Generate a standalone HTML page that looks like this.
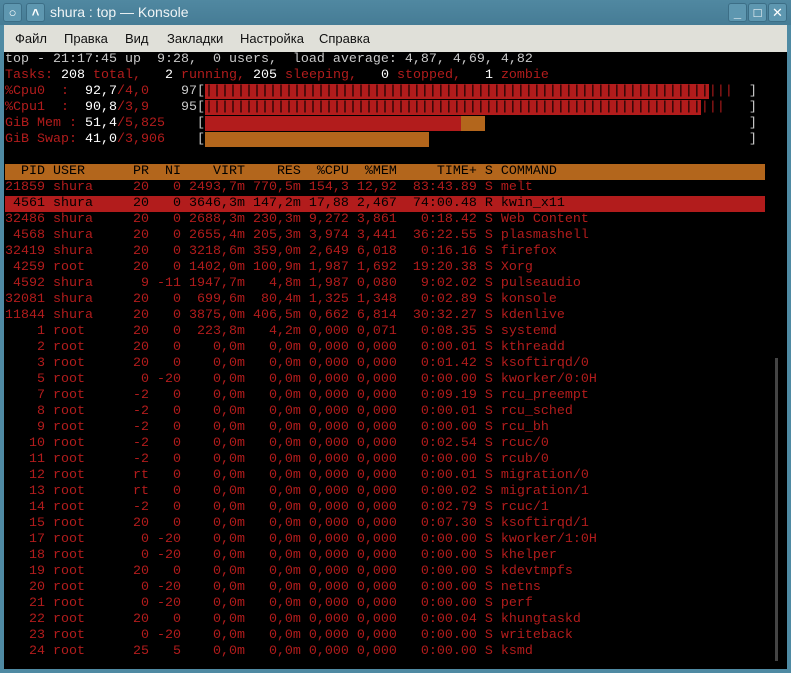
<!DOCTYPE html>
<html><head><meta charset="utf-8"><style>
*{margin:0;padding:0;box-sizing:border-box}
body{width:791px;height:673px;background:#4f8aa3;position:relative;overflow:hidden;font-family:"Liberation Sans","DejaVu Sans",sans-serif}
#title{position:absolute;left:0;top:0;width:791px;height:25px;background:linear-gradient(#5088a1,#467c95)}
.btn{position:absolute;top:3px;width:19px;height:19px;background:#5e97b0;border:1px solid #3c6e86;border-radius:3px;color:#fff;text-align:center;font-size:13px;line-height:17px;font-weight:bold}
#ttext{position:absolute;left:50px;top:4px;color:#f0f4f6;font-size:14px}
#menu{position:absolute;left:4px;top:25px;width:783px;height:27px;background:#e0e0d9}
#menu span{position:absolute;top:6px;font-size:13px;color:#111}
#term{position:absolute;left:4px;top:52px;width:783px;height:617px;background:#000}
pre{position:absolute;left:1px;top:0;font-family:"Liberation Mono","DejaVu Sans Mono",monospace;font-size:13.33px;line-height:16px;color:#b21c1c;white-space:pre}
pre div{height:16px;width:760px}
.w{color:#fff}.g{color:#c8c8c8}.k{color:#000}
.rb{background:#b21c1c;color:#000}
.ob{background:#b3661c;color:#000}
#sb{position:absolute;left:771px;top:306px;width:3px;height:303px;background:#444}
</style></head><body>
<div id="title">
<div class="btn" style="left:3px">○</div>
<div class="btn" style="left:26px">˄</div>
<div id="ttext">shura : top — Konsole</div>
<div class="btn" style="left:728px">_</div>
<div class="btn" style="left:748px">□</div>
<div class="btn" style="left:768px">✕</div>
</div>
<div id="menu">
<span style="left:11px">Файл</span><span style="left:60px">Правка</span><span style="left:121px">Вид</span><span style="left:163px">Закладки</span><span style="left:236px">Настройка</span><span style="left:315px">Справка</span>
</div>
<div id="term">
<pre><div class="g">top - 21:17:45 up  9:28,  0 users,  load average: 4,87, 4,69, 4,82</div><div>Tasks: <span class="w">208 </span>total,   <span class="w">2 </span>running, <span class="w">205 </span>sleeping,   <span class="w">0 </span>stopped,   <span class="w">1 </span>zombie</div><div>%Cpu0  :  <span class="w">92,7</span>/4,0    <span class="g">97[</span><span class="rb">|||||||||||||||||||||||||||||||||||||||||||||||||||||||||||||||</span>|||  <span class="g">]</span></div><div>%Cpu1  :  <span class="w">90,8</span>/3,9    <span class="g">95[</span><span class="rb">||||||||||||||||||||||||||||||||||||||||||||||||||||||||||||||</span>|||   <span class="g">]</span></div><div>GiB Mem : <span class="w">51,4</span>/5,825    <span class="g">[</span><span class="rb">                                </span><span class="ob">   </span>                                 <span class="g">]</span></div><div>GiB Swap: <span class="w">41,0</span>/3,906    <span class="g">[</span><span class="ob">                            </span>                                        <span class="g">]</span></div><div> </div><div class="ob">  PID USER      PR  NI    VIRT    RES  %CPU  %MEM     TIME+ S COMMAND</div><div>21859 shura     20   0 2493,7m 770,5m 154,3 12,92  83:43.89 S melt</div><div class="rb"> 4561 shura     20   0 3646,3m 147,2m 17,88 2,467  74:00.48 R kwin_x11</div><div>32486 shura     20   0 2688,3m 230,3m 9,272 3,861   0:18.42 S Web Content</div><div> 4568 shura     20   0 2655,4m 205,3m 3,974 3,441  36:22.55 S plasmashell</div><div>32419 shura     20   0 3218,6m 359,0m 2,649 6,018   0:16.16 S firefox</div><div> 4259 root      20   0 1402,0m 100,9m 1,987 1,692  19:20.38 S Xorg</div><div> 4592 shura      9 -11 1947,7m   4,8m 1,987 0,080   9:02.02 S pulseaudio</div><div>32081 shura     20   0  699,6m  80,4m 1,325 1,348   0:02.89 S konsole</div><div>11844 shura     20   0 3875,0m 406,5m 0,662 6,814  30:32.27 S kdenlive</div><div>    1 root      20   0  223,8m   4,2m 0,000 0,071   0:08.35 S systemd</div><div>    2 root      20   0    0,0m   0,0m 0,000 0,000   0:00.01 S kthreadd</div><div>    3 root      20   0    0,0m   0,0m 0,000 0,000   0:01.42 S ksoftirqd/0</div><div>    5 root       0 -20    0,0m   0,0m 0,000 0,000   0:00.00 S kworker/0:0H</div><div>    7 root      -2   0    0,0m   0,0m 0,000 0,000   0:09.19 S rcu_preempt</div><div>    8 root      -2   0    0,0m   0,0m 0,000 0,000   0:00.01 S rcu_sched</div><div>    9 root      -2   0    0,0m   0,0m 0,000 0,000   0:00.00 S rcu_bh</div><div>   10 root      -2   0    0,0m   0,0m 0,000 0,000   0:02.54 S rcuc/0</div><div>   11 root      -2   0    0,0m   0,0m 0,000 0,000   0:00.00 S rcub/0</div><div>   12 root      rt   0    0,0m   0,0m 0,000 0,000   0:00.01 S migration/0</div><div>   13 root      rt   0    0,0m   0,0m 0,000 0,000   0:00.02 S migration/1</div><div>   14 root      -2   0    0,0m   0,0m 0,000 0,000   0:02.79 S rcuc/1</div><div>   15 root      20   0    0,0m   0,0m 0,000 0,000   0:07.30 S ksoftirqd/1</div><div>   17 root       0 -20    0,0m   0,0m 0,000 0,000   0:00.00 S kworker/1:0H</div><div>   18 root       0 -20    0,0m   0,0m 0,000 0,000   0:00.00 S khelper</div><div>   19 root      20   0    0,0m   0,0m 0,000 0,000   0:00.00 S kdevtmpfs</div><div>   20 root       0 -20    0,0m   0,0m 0,000 0,000   0:00.00 S netns</div><div>   21 root       0 -20    0,0m   0,0m 0,000 0,000   0:00.00 S perf</div><div>   22 root      20   0    0,0m   0,0m 0,000 0,000   0:00.04 S khungtaskd</div><div>   23 root       0 -20    0,0m   0,0m 0,000 0,000   0:00.00 S writeback</div><div>   24 root      25   5    0,0m   0,0m 0,000 0,000   0:00.00 S ksmd</div></pre>
<div id="sb"></div>
</div>
</body></html>
